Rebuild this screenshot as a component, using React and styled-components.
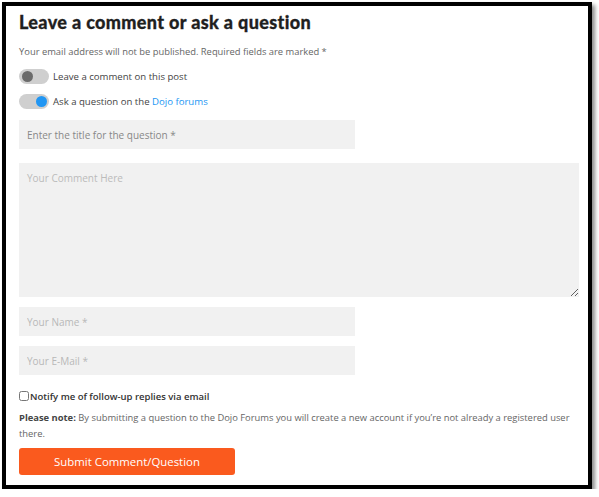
import React from 'react'
import styled, { createGlobalStyle } from 'styled-components'

const GlobalStyle = createGlobalStyle`
  html, body {
    margin: 0;
    padding: 0;
    background: #ffffff;
  }
  * {
    box-sizing: border-box;
  }
`

const Frame = styled.div`
  margin: 2px 0 0 2px;
  width: 590px;
  height: 487px;
  border: 4px solid #000;
  background: #fff;
  box-shadow: 3px 3px 4px rgba(0, 0, 0, 0.45);
  padding: 5px 12px 0 13px;
  display: flex;
  flex-direction: column;
  font-family: "Open Sans", "Noto Sans", sans-serif;
`

const Title = styled.h2`
  margin: 0;
  font-family: Lato, sans-serif;
  font-weight: 900;
  font-size: 18px;
  line-height: 22px;
  letter-spacing: 0.35px;
  color: #1f1f1f;
  -webkit-text-stroke: 0.3px #1f1f1f;
`

const Notice = styled.p`
  margin: 12px 0 0;
  font-size: 9.4px;
  line-height: 14px;
  color: #666;
`

const ToggleRow = styled.label`
  display: flex;
  align-items: center;
  gap: 4px;
  margin-top: ${(p) => p.$top}px;
  font-size: 9.6px;
  color: #444;
  a {
    color: #2196f3;
    text-decoration: none;
  }
`

const Track = styled.span`
  position: relative;
  width: 30px;
  height: 15px;
  border-radius: 8px;
  background: #cfcfcf;
  &::after {
    content: '';
    position: absolute;
    top: 2px;
    left: ${(p) => (p.$on ? '17px' : '3px')};
    width: 11px;
    height: 11px;
    border-radius: 50%;
    background: ${(p) => (p.$on ? '#2196f3' : '#6b6b6b')};
  }
`

const Field = styled.input`
  display: block;
  width: 336px;
  height: 29px;
  margin-top: ${(p) => p.$top}px;
  border: none;
  outline: none;
  background: #f1f1f1;
  padding: 0 8px;
  font-family: "Open Sans", sans-serif;
  font-size: 10px;
  &::placeholder {
    color: ${(p) => (p.$muted ? '#b8b8b8' : '#888')};
  }
`

const Comment = styled.textarea`
  display: block;
  width: 560px;
  height: 134px;
  margin-top: 14px;
  border: none;
  outline: none;
  background: #f1f1f1;
  padding: 8px 8px;
  font-family: "Open Sans", sans-serif;
  font-size: 10px;
  resize: vertical;
  &::placeholder {
    color: #bbb;
  }
`

const CheckRow = styled.label`
  display: flex;
  align-items: center;
  height: 14px;
  margin-top: 14px;
  font-size: 9.5px;
  font-weight: 600;
  color: #333;
  input {
    margin: 0 1px 0 0;
    width: 10px;
    height: 10px;
  }
`

const Note = styled.p`
  margin: 7px 0 0;
  font-size: 9.4px;
  line-height: 16px;
  color: #666;
  b {
    color: #444;
    font-weight: 700;
  }
`

const Submit = styled.button`
  margin-top: 6px;
  width: 216px;
  height: 27px;
  border: none;
  border-radius: 3px;
  background: #fa5a1e;
  color: #fff;
  font-family: "Open Sans", sans-serif;
  font-size: 11.4px;
  cursor: pointer;
`

export default function App() {
  return (
    <>
      <GlobalStyle />
      <Frame>
        <Title>Leave a comment or ask a question</Title>
        <Notice>Your email address will not be published. Required fields are marked *</Notice>
        <ToggleRow $top={10}>
          <Track />
          Leave a comment on this post
        </ToggleRow>
        <ToggleRow $top={10}>
          <Track $on />
          <span>Ask a question on the <a href="#">Dojo forums</a></span>
        </ToggleRow>
        <Field $top={11} placeholder="Enter the title for the question *" />
        <Comment placeholder="Your Comment Here" />
        <Field $top={10} $muted placeholder="Your Name *" />
        <Field $top={10} $muted placeholder="Your E-Mail *" />
        <CheckRow>
          <input type="checkbox" />
          Notify me of follow-up replies via email
        </CheckRow>
        <Note>
          <b>Please note:</b> By submitting a question to the Dojo Forums you will create a new account if you’re not already a registered user there.
        </Note>
        <Submit>Submit Comment/Question</Submit>
      </Frame>
    </>
  )
}
